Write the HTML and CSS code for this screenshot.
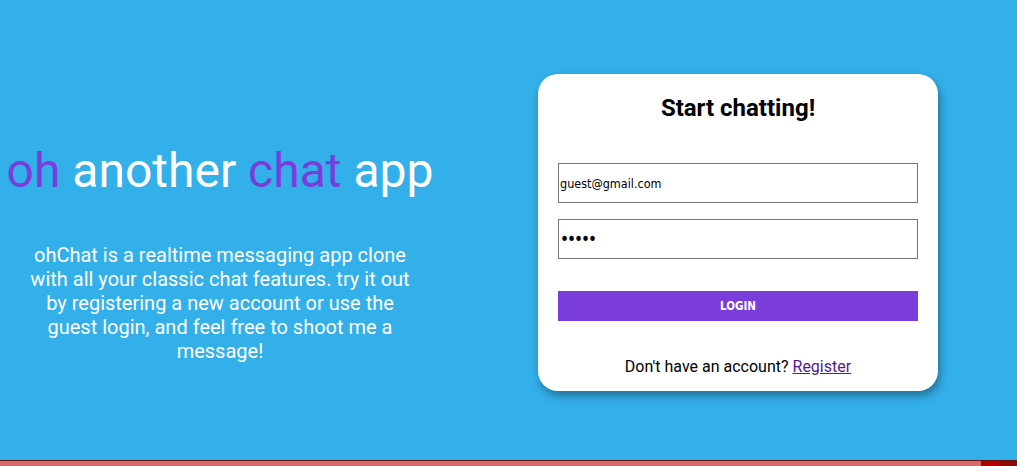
FILE: index.html
```html
<!DOCTYPE html>
<html>
<head>
<meta charset="utf-8">
<link rel="stylesheet" href="styles.css">
</head>
<body>
<div class="page">
  <section class="intro">
    <h1 class="headline"><span class="accent">oh</span> another <span class="accent">chat</span> app</h1>
    <p class="blurb">ohChat is a realtime messaging app clone with all your classic chat features. try it out by registering a new account or use the guest login, and feel free to shoot me a message!</p>
  </section>
  <section class="card">
    <h2 class="card-title">Start chatting!</h2>
    <form class="form">
      <input class="field" type="email" value="guest@gmail.com">
      <input class="field" type="password" value="guest">
      <button class="login" type="button">LOGIN</button>
    </form>
    <p class="signup">Don't have an account? <a href="#" class="link">Register</a></p>
  </section>
</div>
<div class="bottom-bar"><span class="bar-fill"></span><span class="bar-red"></span><span class="bar-dark"></span></div>
</body>
</html>
```
FILE: styles.css
```css
html, body {
  margin: 0;
  padding: 0;
  height: 100%;
  background: #33afea;
  font-family: Roboto, "Liberation Sans", sans-serif;
  overflow: hidden;
}
.page {
  display: flex;
  align-items: flex-start;
  padding-top: 74px;
}
.intro {
  width: 440px;
  text-align: center;
  color: #fff;
}
.headline {
  margin: 69px 0 0 0;
  font-weight: 400;
  font-size: 48px;
  line-height: 56px;
}
.accent {
  color: #7a3ddb;
}
.blurb {
  width: 390px;
  margin: 44px auto 0 auto;
  font-size: 20px;
  line-height: 24px;
}
.card {
  margin-left: 98px;
  width: 400px;
  height: 317px;
  box-sizing: border-box;
  background: #fff;
  border-radius: 20px;
  box-shadow: 2px 5px 8px rgba(0, 0, 0, 0.35);
  padding: 20px 20px 0 20px;
  display: flex;
  flex-direction: column;
}
.card-title {
  margin: 0;
  text-align: center;
  font-size: 24px;
  font-weight: 700;
  line-height: 28px;
  color: #000;
}
.form {
  display: flex;
  flex-direction: column;
  margin-top: 41px;
}
.field {
  height: 40px;
  box-sizing: border-box;
  border: 1px solid #767676;
  padding: 0 0 0 1px;
  font-family: "DejaVu Sans Condensed", "DejaVu Sans", sans-serif;
  font-size: 12.5px;
  color: #000;
  margin-bottom: 16px;
  outline: none;
}
.field[type="password"] {
  font-size: 17px;
  letter-spacing: -2px;
}
.login {
  margin-top: 16px;
  height: 30px;
  border: none;
  background: #7a3ddb;
  color: #fff;
  font-family: "DejaVu Sans Condensed", "DejaVu Sans", sans-serif;
  font-weight: 700;
  font-size: 11.5px;
}
.signup {
  margin: 36px 0 0 0;
  text-align: center;
  font-size: 16px;
  line-height: 20px;
  color: #000;
}
.link {
  color: #551a8b;
}
.bottom-bar {
  position: fixed;
  left: 0;
  right: 0;
  bottom: 0;
  height: 5px;
  border-top: 1px solid #6b1010;
  display: flex;
}
.bar-fill {
  flex: 1;
  background: #d46a6a;
}
.bar-red {
  width: 20px;
  background: #b10000;
}
.bar-dark {
  width: 16px;
  background: #8c0a0a;
}
```
